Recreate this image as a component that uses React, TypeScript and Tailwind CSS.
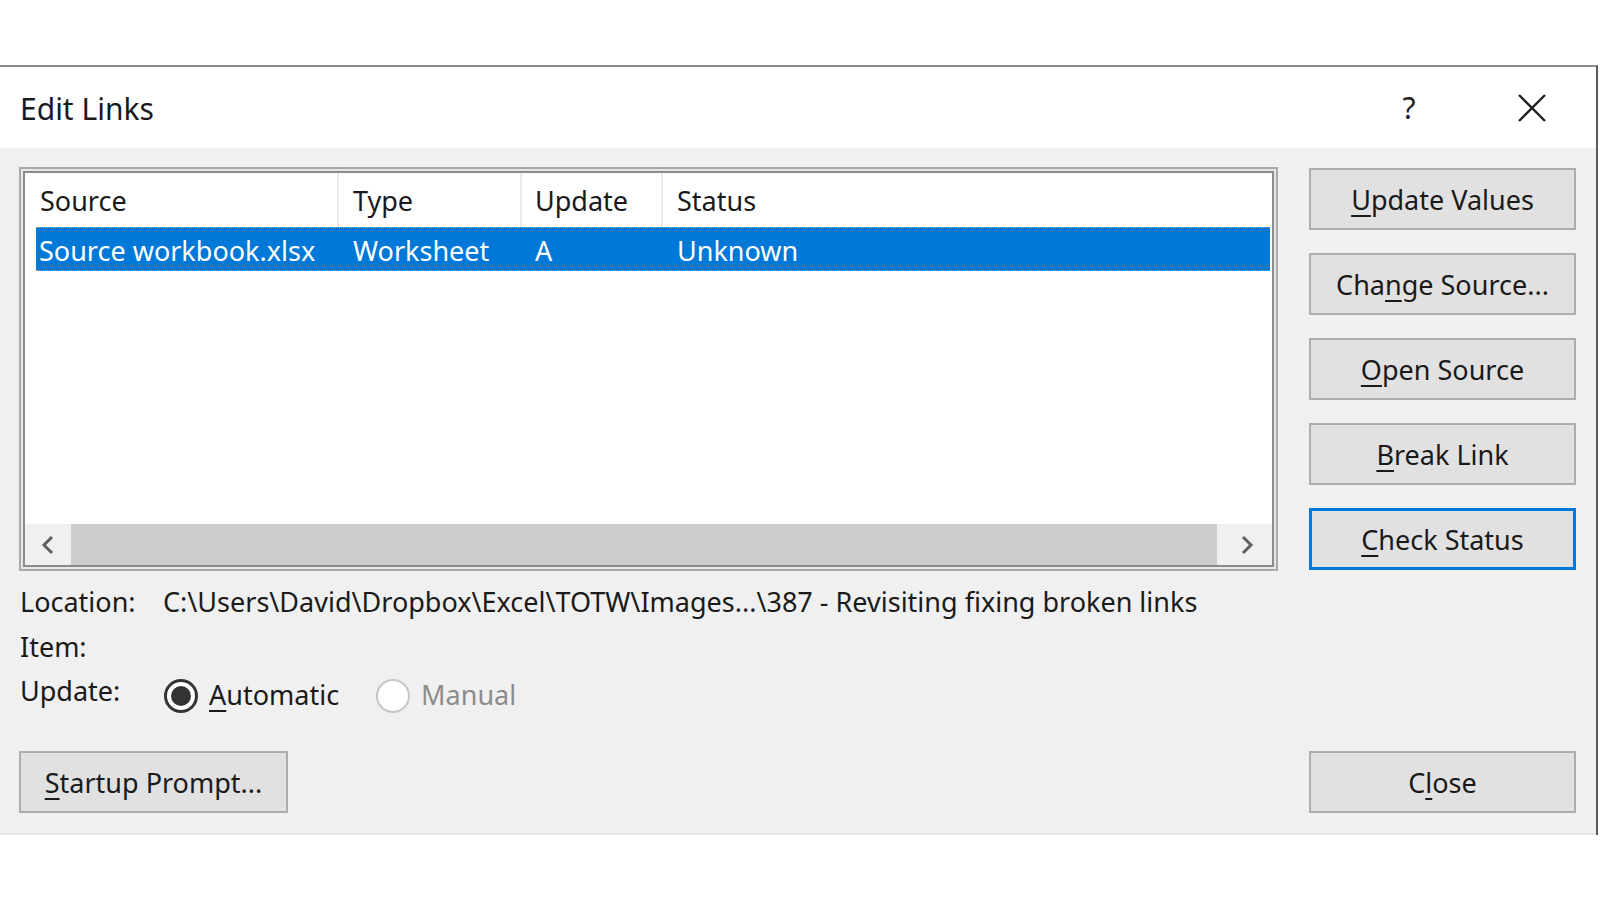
import { ReactNode } from 'react'

const font = { fontFamily: '"Noto Sans", "Open Sans", sans-serif' }

function Btn({ children, focused }: { children: ReactNode; focused?: boolean }) {
  return (
    <button
      className={
        'h-[62px] w-[267px] bg-[#e1e1e1] text-[27px] text-[#1a1a1a] flex items-center justify-center pt-[3px] ' +
        (focused ? 'border-[3px] border-[#0078d7]' : 'border-2 border-[#adadad]')
      }
    >
      <span>{children}</span>
    </button>
  )
}

function Key({ children }: { children: ReactNode }) {
  return <span className="underline decoration-2 underline-offset-[5px]">{children}</span>
}

export default function App() {
  return (
    <div className="w-full h-[900px] bg-white pt-[65px] text-[#1a1a1a]" style={font}>
      <div className="w-[1598px] border-t-2 border-r-2 border-[#8a8a8a] border-r-[#5a5a5a]">
        {/* title bar */}
        <div className="h-[81px] bg-white flex items-center pl-[20px]">
          <div className="text-[30px] flex-1 pt-[2px]">Edit Links</div>
          <div className="text-[30px] w-[40px] text-center text-[#222]">?</div>
          <div className="w-[88px]" />
          <svg width="30" height="30" viewBox="0 0 30 30" className="mr-[49px]">
            <path d="M2 2 L28 28 M28 2 L2 28" stroke="#222" strokeWidth="2.4" />
          </svg>
        </div>

        {/* body */}
        <div className="h-[685px] bg-[#f0f0f0] pl-[19px] pr-[20px] pt-[19px] flex flex-col text-[27px]">
          <div className="flex">
            {/* list box */}
            <div className="w-[1259px] h-[404px] border-2 border-[#a9a9a9] bg-[#e6e6e6] p-[2px]">
              <div className="h-full border-2 border-[#8c8c8c] bg-white flex flex-col">
                <div className="grid grid-cols-[314px_183px_141px_1fr] h-[54px] items-center">
                  <div className="pl-[15px] pt-[2px] h-full flex items-center border-r-2 border-[#ebebeb]">Source</div>
                  <div className="pl-[14px] pt-[2px] h-full flex items-center border-r-2 border-[#ebebeb]">Type</div>
                  <div className="pl-[13px] pt-[2px] h-full flex items-center border-r-2 border-[#ebebeb]">Update</div>
                  <div className="pl-[14px] pt-[2px]">Status</div>
                </div>
                <div className="pl-[11px] pr-[2px]">
                  <div className="grid grid-cols-[303px_183px_141px_1fr] h-[44px] pt-[3px] items-center bg-[#0078d7] text-white border-y border-dotted border-[#e0a050]">
                    <div className="pl-[3px]">Source workbook.xlsx</div>
                    <div className="pl-[14px]">Worksheet</div>
                    <div className="pl-[13px]">A</div>
                    <div className="pl-[14px]">Unknown</div>
                  </div>
                </div>
                <div className="flex-1" />
                <div className="h-[41px] bg-[#f0f0f0] flex items-center">
                  <div className="w-[46px] flex justify-center">
                    <svg width="16" height="22" viewBox="0 0 16 22">
                      <path d="M12 3 L4 11 L12 19" fill="none" stroke="#606060" strokeWidth="3" />
                    </svg>
                  </div>
                  <div className="flex-1 h-full bg-[#cdcdcd]" />
                  <div className="w-[55px] flex justify-center pl-[4px]">
                    <svg width="16" height="22" viewBox="0 0 16 22">
                      <path d="M4 3 L12 11 L4 19" fill="none" stroke="#606060" strokeWidth="3" />
                    </svg>
                  </div>
                </div>
              </div>
            </div>

            {/* right buttons */}
            <div className="ml-[31px] flex flex-col gap-[23px] pt-[1px]">
              <Btn><Key>U</Key>pdate Values</Btn>
              <Btn>Cha<Key>n</Key>ge Source...</Btn>
              <Btn><Key>O</Key>pen Source</Btn>
              <Btn><Key>B</Key>reak Link</Btn>
              <Btn focused><Key>C</Key>heck Status</Btn>
            </div>
          </div>

          {/* info rows */}
          <div className="mt-[8px] flex flex-col pl-[1px]">
            <div className="h-[46px] flex items-center">
              <div className="w-[143px]">Location:</div>
              <div>C:\Users\David\Dropbox\Excel\TOTW\Images...\387 - Revisiting fixing broken links</div>
            </div>
            <div className="h-[45px] flex items-center">
              <div>Item:</div>
            </div>
            <div className="h-[46px] flex items-center">
              <div className="w-[144px] -mt-[4px]">Update:</div>
              <div className="flex items-center mt-[5px]">
                <div className="w-[34px] h-[34px] rounded-full border-[3px] border-[#333] bg-white flex items-center justify-center">
                  <div className="w-[20px] h-[20px] rounded-full bg-[#333]" />
                </div>
                <div className="ml-[11px]"><Key>A</Key>utomatic</div>
                <div className="ml-[37px] w-[34px] h-[34px] rounded-full border-2 border-[#c6c6c6] bg-white" />
                <div className="ml-[11px] text-[#8c8c8c]">Manual</div>
              </div>
            </div>
          </div>

          {/* bottom buttons */}
          <div className="mt-[35px] flex justify-between">
            <button className="h-[62px] w-[269px] bg-[#e1e1e1] border-2 border-[#adadad] text-[27px] flex items-center justify-center pt-[3px]">
              <span><Key>S</Key>tartup Prompt...</span>
            </button>
            <Btn>C<Key>l</Key>ose</Btn>
          </div>
        </div>
        <div className="h-[2px] bg-[#e6e6e6]" />
      </div>
    </div>
  )
}
